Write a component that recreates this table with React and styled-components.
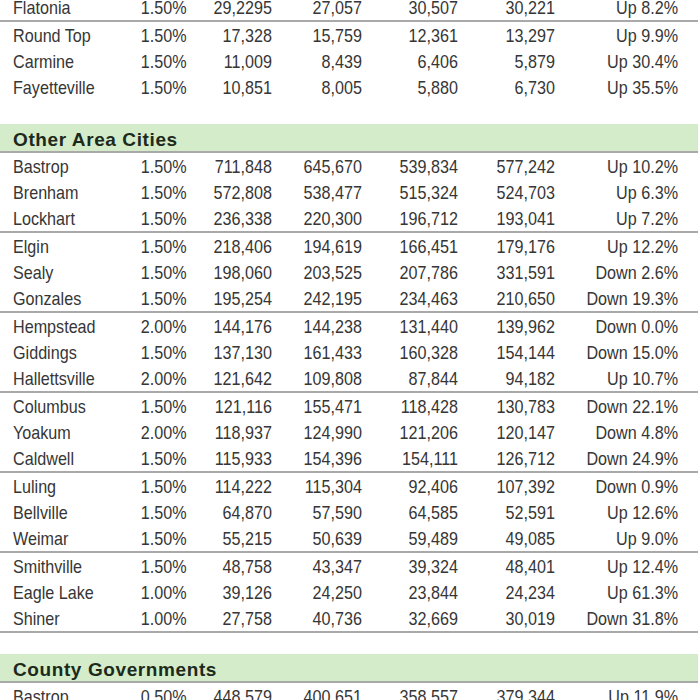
import React from "react";
import styled, { createGlobalStyle } from "styled-components";

const GlobalStyle = createGlobalStyle`
  html, body {
    margin: 0;
    padding: 0;
    background: #ffffff;
    overflow: hidden;
  }
`;

const Page = styled.div`
  width: 698px;
  margin-top: -6px;
  font-family: "Liberation Sans", Arial, sans-serif;
  color: #363636;
`;

const Group = styled.div`
  border-bottom: 2px solid ${(p) => (p.$open ? "transparent" : "#a9a9a9")};
`;

const Row = styled.div`
  display: grid;
  grid-template-columns: 120px 52px 87px 90px 96px 97px 123px;
  padding-left: 13px;
  height: 26px;
  box-sizing: border-box;
  padding-top: 2px;
  line-height: 24px;
  font-size: 19px;
  white-space: nowrap;
`;

/* the print face is a narrow grotesque: squeeze Liberation Sans to match */
const Name = styled.span`
  text-align: left;
  transform: scaleX(0.85);
  transform-origin: left center;
`;

const Num = styled.span`
  text-align: right;
  transform: scaleX(0.85);
  transform-origin: right center;
`;

const SectionHead = styled.div`
  background: #d5ecca;
  height: 23px;
  padding: 4px 0 0 13px;
  line-height: 23px;
  border-bottom: 2px solid #a9a9a9;
  font-weight: bold;
  font-size: 19px;
  letter-spacing: 0.6px;
  color: #1c2a1c;
`;

const Spacer = styled.div`
  height: ${(p) => p.$h}px;
`;

const top = [
  [["Flatonia", "1.50%", "29,2295", "27,057", "30,507", "30,221", "Up 8.2%"]],
  [
    ["Round Top", "1.50%", "17,328", "15,759", "12,361", "13,297", "Up 9.9%"],
    ["Carmine", "1.50%", "11,009", "8,439", "6,406", "5,879", "Up 30.4%"],
    ["Fayetteville", "1.50%", "10,851", "8,005", "5,880", "6,730", "Up 35.5%"],
  ],
];

const cities = [
  [
    ["Bastrop", "1.50%", "711,848", "645,670", "539,834", "577,242", "Up 10.2%"],
    ["Brenham", "1.50%", "572,808", "538,477", "515,324", "524,703", "Up 6.3%"],
    ["Lockhart", "1.50%", "236,338", "220,300", "196,712", "193,041", "Up 7.2%"],
  ],
  [
    ["Elgin", "1.50%", "218,406", "194,619", "166,451", "179,176", "Up 12.2%"],
    ["Sealy", "1.50%", "198,060", "203,525", "207,786", "331,591", "Down 2.6%"],
    ["Gonzales", "1.50%", "195,254", "242,195", "234,463", "210,650", "Down 19.3%"],
  ],
  [
    ["Hempstead", "2.00%", "144,176", "144,238", "131,440", "139,962", "Down 0.0%"],
    ["Giddings", "1.50%", "137,130", "161,433", "160,328", "154,144", "Down 15.0%"],
    ["Hallettsville", "2.00%", "121,642", "109,808", "87,844", "94,182", "Up 10.7%"],
  ],
  [
    ["Columbus", "1.50%", "121,116", "155,471", "118,428", "130,783", "Down 22.1%"],
    ["Yoakum", "2.00%", "118,937", "124,990", "121,206", "120,147", "Down 4.8%"],
    ["Caldwell", "1.50%", "115,933", "154,396", "154,111", "126,712", "Down 24.9%"],
  ],
  [
    ["Luling", "1.50%", "114,222", "115,304", "92,406", "107,392", "Down 0.9%"],
    ["Bellville", "1.50%", "64,870", "57,590", "64,585", "52,591", "Up 12.6%"],
    ["Weimar", "1.50%", "55,215", "50,639", "59,489", "49,085", "Up 9.0%"],
  ],
  [
    ["Smithville", "1.50%", "48,758", "43,347", "39,324", "48,401", "Up 12.4%"],
    ["Eagle Lake", "1.00%", "39,126", "24,250", "23,844", "24,234", "Up 61.3%"],
    ["Shiner", "1.00%", "27,758", "40,736", "32,669", "30,019", "Down 31.8%"],
  ],
];

const counties = [
  [["Bastrop", "0.50%", "448,579", "400,651", "358,557", "379,344", "Up 11.9%"]],
];

function DataRow({ cells }) {
  const [name, ...nums] = cells;
  return (
    <Row>
      <Name>{name}</Name>
      {nums.map((n, i) => (
        <Num key={i}>{n}</Num>
      ))}
    </Row>
  );
}

function Groups({ groups, openLast }) {
  return groups.map((g, gi) => (
    <Group key={gi} $open={openLast && gi === groups.length - 1}>
      {g.map((r) => (
        <DataRow key={r[0]} cells={r} />
      ))}
    </Group>
  ));
}

export default function App() {
  return (
    <>
      <GlobalStyle />
      <Page>
        <Groups groups={top} openLast />
        <Spacer $h={22} />
        <SectionHead>Other Area Cities</SectionHead>
        <Groups groups={cities} />
        <Spacer $h={21} />
        <SectionHead>County Governments</SectionHead>
        <Groups groups={counties} />
      </Page>
    </>
  );
}
